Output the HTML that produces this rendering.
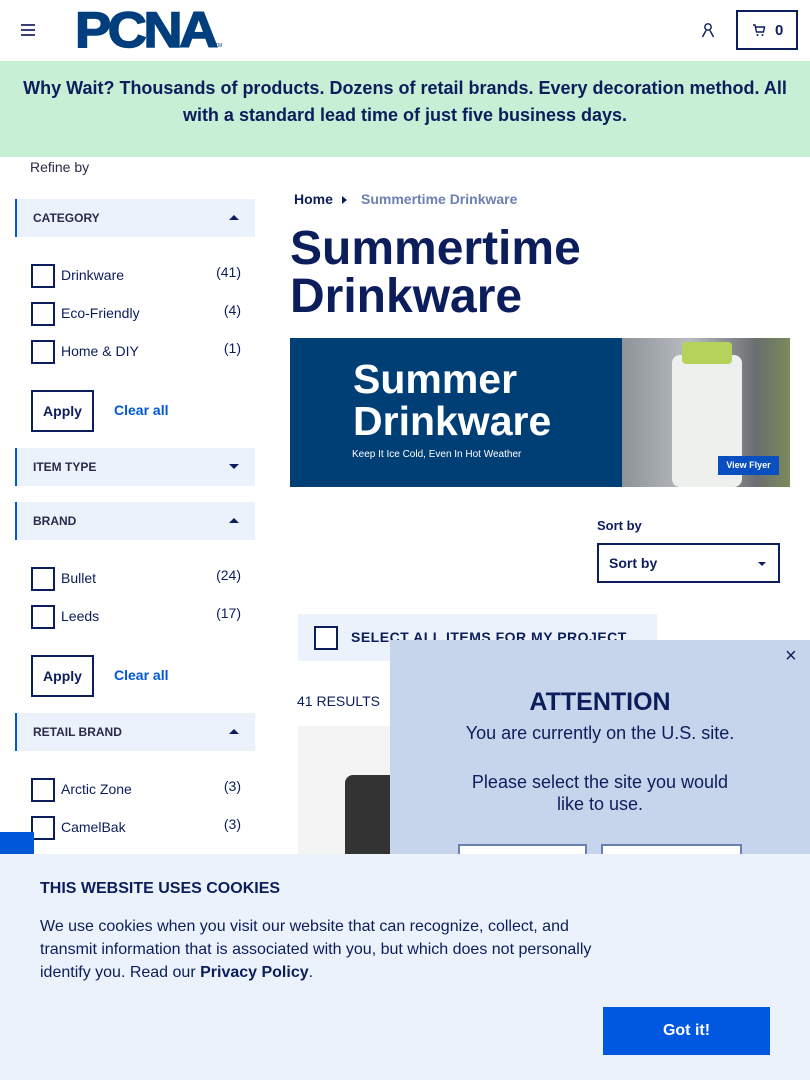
<!DOCTYPE html>
<html><head><style>
*{box-sizing:border-box;margin:0;padding:0}
body{width:810px;height:1080px;overflow:hidden;position:relative;font-family:"Liberation Sans",sans-serif;color:#0c1d5c;background:#fff}
.abs{position:absolute}
.banner{top:61px;left:0;width:810px;height:96px;background:#c6efd6;text-align:center;font-weight:bold;font-size:18px;line-height:27px;padding:14px 20px 0;color:#0c1d5c}
.facet{left:15px;width:240px;height:38px;background:#ebf2fb;border-left:2px solid #0057d8;font-size:12px;font-weight:bold;padding:12px 0 0 16px;color:#2a2a4a}
.facet .car{position:absolute;right:16px;top:16px;width:0;height:0;border-left:5px solid transparent;border-right:5px solid transparent}
.up{border-bottom:5px solid #0c1d5c}.dn{border-top:5px solid #0c1d5c}
.cb{left:31px;width:24px;height:24px;border:2px solid #0c1d5c;background:#fff}
.lbl{left:61px;font-size:14px}
.cnt{right:569px;font-size:14px}
.apply{left:31px;width:63px;height:42px;border:2px solid #0c1d5c;font-weight:bold;font-size:14px;text-align:center;line-height:38px}
.clear{left:114px;font-size:14px;font-weight:bold;color:#0057d8}
</style></head><body>
<div class="abs" style="left:21px;top:24px;width:14px">
<div style="height:2px;background:#3a3f7a;margin-bottom:3px"></div><div style="height:2px;background:#3a3f7a;margin-bottom:3px"></div><div style="height:2px;background:#3a3f7a"></div></div>
<div class="abs" style="left:75px;top:1px;font-size:50px;font-weight:900;color:#003e7e;letter-spacing:-3px;transform:scale(1.08,1.0);transform-origin:left top;-webkit-text-stroke:1.5px #003e7e">PCNA</div>
<div class="abs" style="left:215px;top:43px;font-size:5px;color:#003e7e">TM</div>
<svg class="abs" style="left:700px;top:22px" width="16" height="16" viewBox="0 0 16 16"><circle cx="8" cy="5" r="3.2" fill="none" stroke="#0c1d5c" stroke-width="1.4"/><path d="M2.5 15 L6 8.5 M13.5 15 L10 8.5" stroke="#0c1d5c" stroke-width="1.4" fill="none"/></svg>
<div class="abs" style="left:736px;top:10px;width:62px;height:40px;border:2px solid #0c1d5c"></div>
<svg class="abs" style="left:752px;top:23px" width="14" height="14" viewBox="0 0 14 14"><path d="M1 2h2l1.5 7h7l1-5H4" fill="none" stroke="#0c1d5c" stroke-width="1.4"/><circle cx="5.5" cy="12" r="1" fill="#0c1d5c"/><circle cx="10.5" cy="12" r="1" fill="#0c1d5c"/></svg>
<div class="abs" style="left:775px;top:22px;font-weight:bold;font-size:15px">0</div>
<div class="abs banner">Why Wait? Thousands of products. Dozens of retail brands. Every decoration method. All with a standard lead time of just five business days.</div>
<div class="abs" style="left:30px;top:159px;font-size:14px;color:#2a2a4a">Refine by</div>
<div class="abs facet" style="top:199px">CATEGORY<span class="car up"></span></div>
<div class="abs cb" style="top:264px"></div><div class="abs lbl" style="top:267px">Drinkware</div><div class="abs cnt" style="top:264px">(41)</div>
<div class="abs cb" style="top:302px"></div><div class="abs lbl" style="top:305px">Eco-Friendly</div><div class="abs cnt" style="top:302px">(4)</div>
<div class="abs cb" style="top:340px"></div><div class="abs lbl" style="top:343px">Home &amp; DIY</div><div class="abs cnt" style="top:340px">(1)</div>
<div class="abs apply" style="top:390px">Apply</div><div class="abs clear" style="top:402px">Clear all</div>
<div class="abs facet" style="top:448px">ITEM TYPE<span class="car dn"></span></div>
<div class="abs facet" style="top:502px">BRAND<span class="car up"></span></div>
<div class="abs cb" style="top:567px"></div><div class="abs lbl" style="top:570px">Bullet</div><div class="abs cnt" style="top:567px">(24)</div>
<div class="abs cb" style="top:605px"></div><div class="abs lbl" style="top:608px">Leeds</div><div class="abs cnt" style="top:605px">(17)</div>
<div class="abs apply" style="top:655px">Apply</div><div class="abs clear" style="top:667px">Clear all</div>
<div class="abs facet" style="top:713px">RETAIL BRAND<span class="car up"></span></div>
<div class="abs cb" style="top:778px"></div><div class="abs lbl" style="top:781px">Arctic Zone</div><div class="abs cnt" style="top:778px">(3)</div>
<div class="abs cb" style="top:816px"></div><div class="abs lbl" style="top:819px">CamelBak</div><div class="abs cnt" style="top:816px">(3)</div>
<div class="abs" style="left:0;top:832px;width:34px;height:30px;background:#0057d8"></div>
<div class="abs" style="left:294px;top:191px;font-size:14px;font-weight:bold">Home</div>
<div class="abs" style="left:342px;top:196px;border-left:5px solid #0c1d5c;border-top:4px solid transparent;border-bottom:4px solid transparent"></div>
<div class="abs" style="left:361px;top:191px;font-size:14px;font-weight:bold;color:#6d7fb0">Summertime Drinkware</div>
<div class="abs" style="left:290px;top:225px;font-size:48px;font-weight:bold;line-height:48px;color:#0c1d5c">Summertime<br>Drinkware</div>
<div class="abs" style="left:290px;top:338px;width:332px;height:149px;background:#003e76"></div>
<div class="abs" style="left:622px;top:338px;width:168px;height:149px;background:linear-gradient(90deg,#8e9398,#b8bcc0 40%,#6a6e70 80%,#7a8a5a)"></div>
<div class="abs" style="left:672px;top:355px;width:70px;height:132px;background:#eef0ee;border-radius:8px"></div>
<div class="abs" style="left:682px;top:342px;width:50px;height:22px;background:#b5d35a;border-radius:4px"></div>
<div class="abs" style="left:353px;top:358px;font-size:41px;font-weight:bold;color:#fff;line-height:42px">Summer<br>Drinkware</div>
<div class="abs" style="left:352px;top:449px;font-size:10px;color:#fff">Keep It Ice Cold, Even In Hot Weather</div>
<div class="abs" style="left:718px;top:456px;width:61px;height:19px;background:#0a4fc0;color:#fff;font-size:9px;font-weight:bold;text-align:center;line-height:19px">View Flyer</div>
<div class="abs" style="left:597px;top:518px;font-size:13px;font-weight:bold">Sort by</div>
<div class="abs" style="left:597px;top:543px;width:183px;height:40px;border:2px solid #0c1d5c;font-size:14px;font-weight:bold;padding:10px 0 0 10px">Sort by<span class="abs" style="right:12px;top:17px;border-top:4px solid #0c1d5c;border-left:4px solid transparent;border-right:4px solid transparent"></span></div>
<div class="abs" style="left:298px;top:614px;width:359px;height:47px;background:#ebf2fb"></div>
<div class="abs" style="left:314px;top:626px;width:24px;height:24px;border:2px solid #0c1d5c;background:#fff"></div>
<div class="abs" style="left:351px;top:629px;font-size:14px;font-weight:bold;letter-spacing:.5px">SELECT ALL ITEMS FOR MY PROJECT</div>
<div class="abs" style="left:297px;top:693px;font-size:14px">41 RESULTS</div>
<div class="abs" style="left:298px;top:726px;width:100px;height:130px;background:#f4f4f4"></div>
<div class="abs" style="left:345px;top:775px;width:50px;height:80px;background:#333;border-radius:8px 0 0 0"></div>
<div class="abs" style="left:390px;top:640px;width:420px;height:220px;background:#c6d5eb"></div>
<div class="abs" style="left:785px;top:645px;font-size:20px">×</div>
<div class="abs" style="left:390px;top:688px;width:420px;text-align:center;font-size:25px;font-weight:bold">ATTENTION</div>
<div class="abs" style="left:390px;top:722px;width:420px;text-align:center;font-size:18px;line-height:22px">You are currently on the U.S. site.</div>
<div class="abs" style="left:390px;top:771px;width:420px;text-align:center;font-size:18px;line-height:22px">Please select the site you would<br>like to use.</div>
<div class="abs" style="left:458px;top:844px;width:129px;height:20px;border:2px solid #6d7fb0;background:#fff"></div>
<div class="abs" style="left:601px;top:844px;width:141px;height:20px;border:2px solid #6d7fb0;background:#fff"></div>
<div class="abs" style="left:0;top:854px;width:810px;height:226px;background:#ebf2fb"></div>
<div class="abs" style="left:40px;top:880px;font-size:16px;font-weight:bold">THIS WEBSITE USES COOKIES</div>
<div class="abs" style="left:40px;top:915px;width:570px;font-size:16px;line-height:23px">We use cookies when you visit our website that can recognize, collect, and transmit information that is associated with you, but which does not personally identify you. Read our <b>Privacy Policy</b>.</div>
<div class="abs" style="left:603px;top:1007px;width:167px;height:48px;background:#0057e0;color:#fff;font-size:16px;font-weight:bold;text-align:center;line-height:48px">Got it!</div>
</body></html>
